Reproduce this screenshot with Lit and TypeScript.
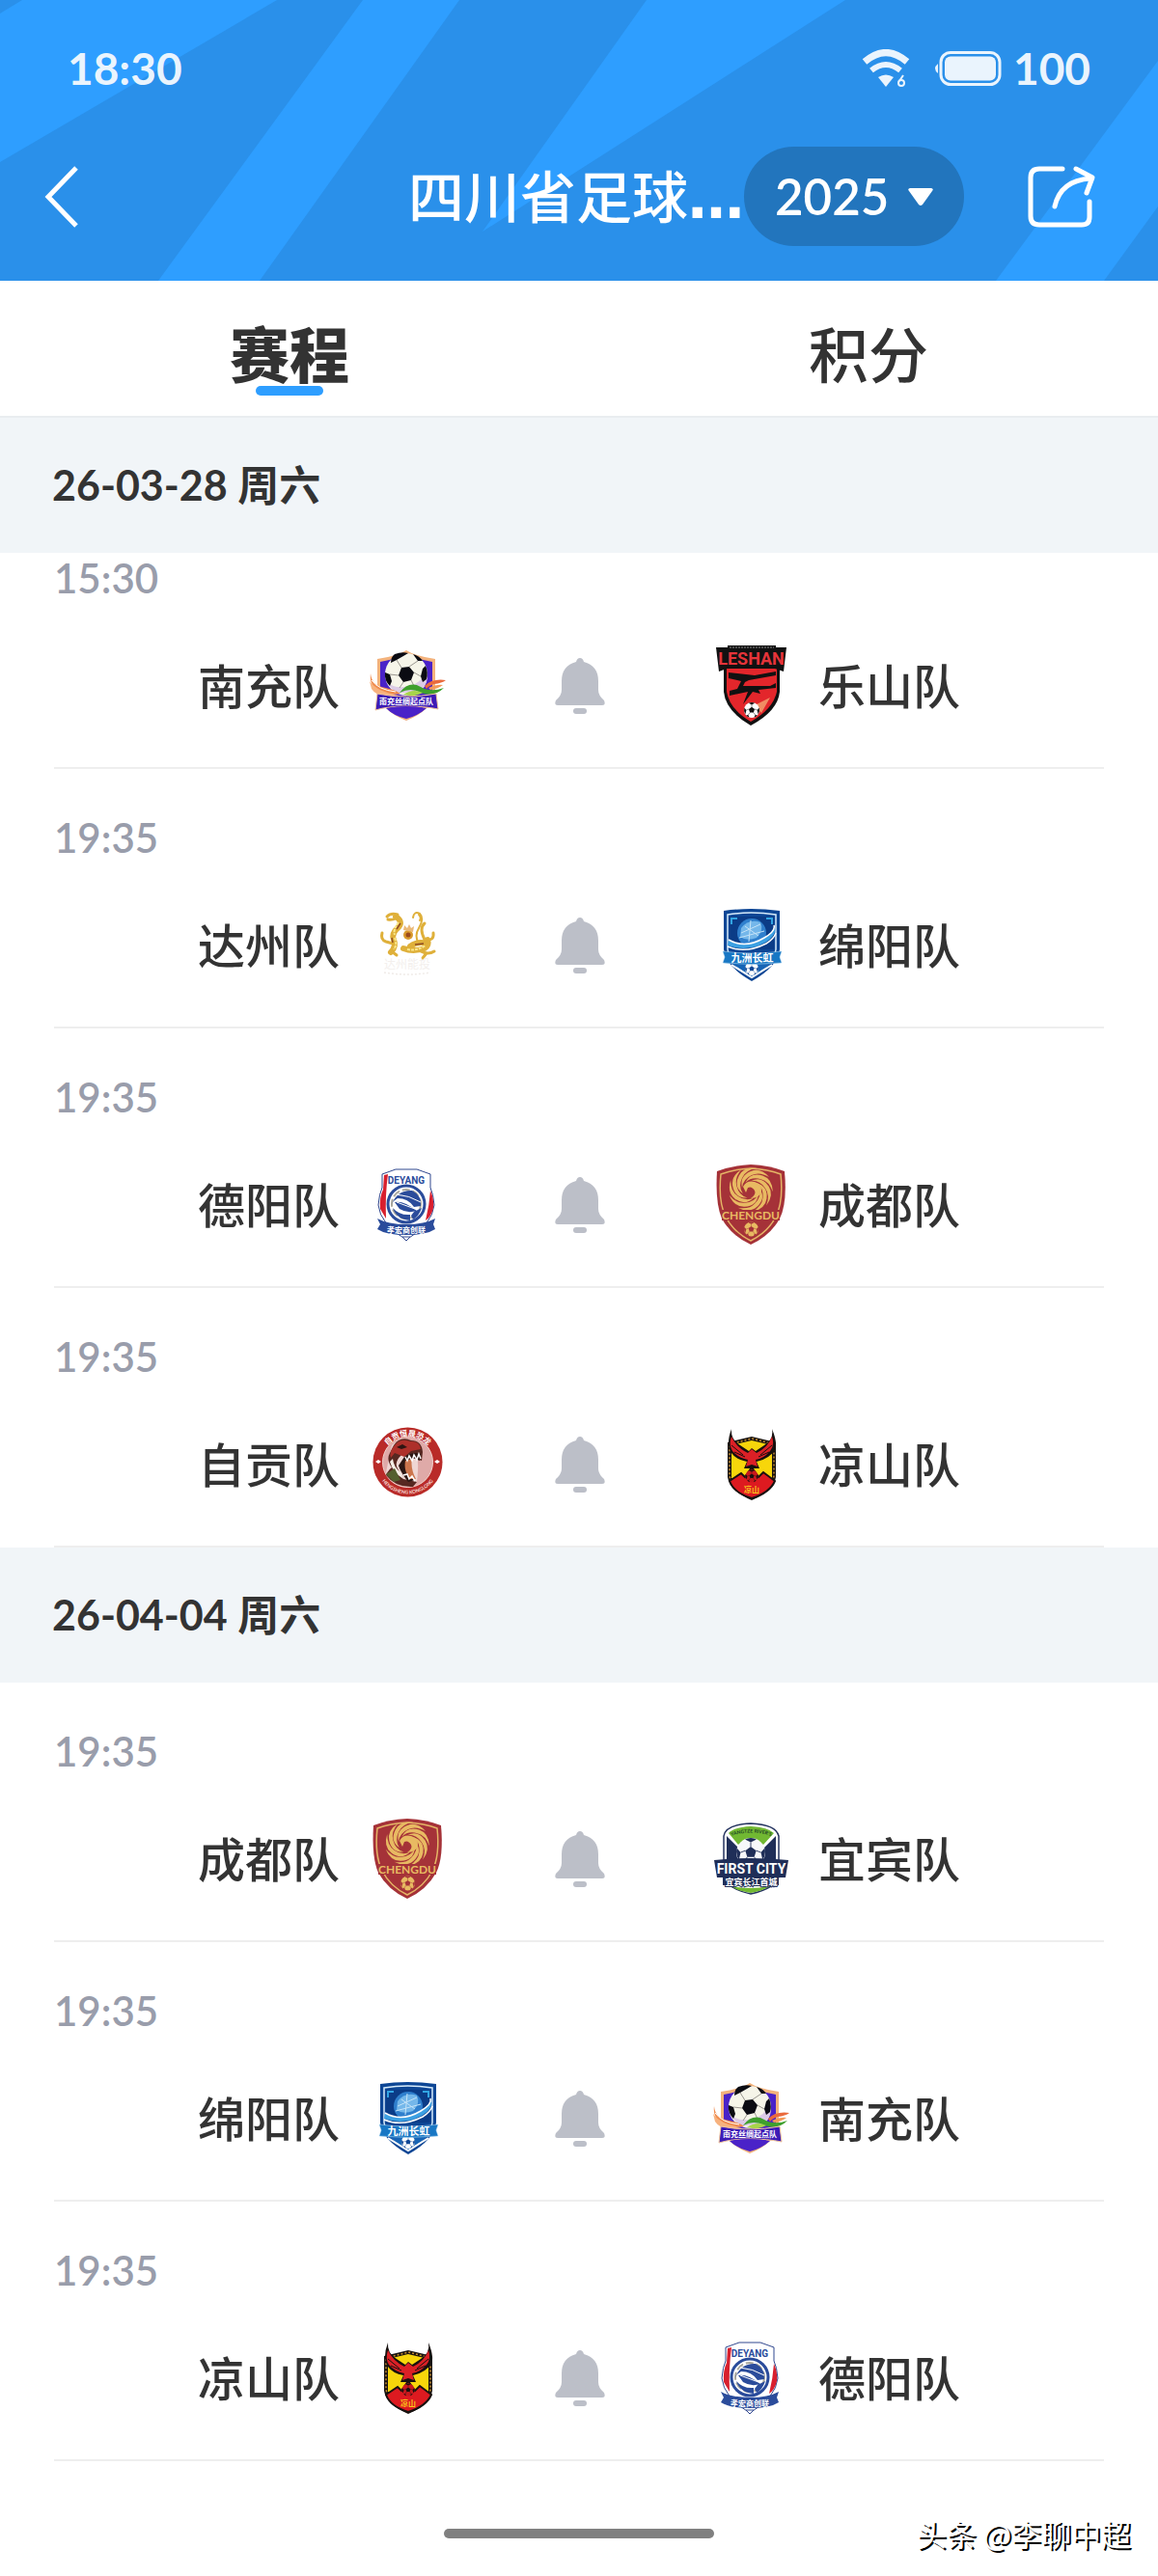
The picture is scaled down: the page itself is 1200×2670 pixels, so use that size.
import { LitElement, html, css, svg } from "lit";
import { customElement, property, state } from "lit/decorators.js";

type Team = "nanchong" | "leshan" | "dazhou" | "mianyang" | "deyang" | "chengdu" | "zigong" | "liangshan" | "yibin";

interface Match {
  time: string;
  home: Team;
  away: Team;
}

interface Day {
  date: string;
  matches: Match[];
}

const NAMES: Record<Team, string> = {
  nanchong: "南充队",
  leshan: "乐山队",
  dazhou: "达州队",
  mianyang: "绵阳队",
  deyang: "德阳队",
  chengdu: "成都队",
  zigong: "自贡队",
  liangshan: "凉山队",
  yibin: "宜宾队",
};

const DAYS: Day[] = [
  {
    date: "26-03-28 周六",
    matches: [
      { time: "15:30", home: "nanchong", away: "leshan" },
      { time: "19:35", home: "dazhou", away: "mianyang" },
      { time: "19:35", home: "deyang", away: "chengdu" },
      { time: "19:35", home: "zigong", away: "liangshan" },
    ],
  },
  {
    date: "26-04-04 周六",
    matches: [
      { time: "19:35", home: "chengdu", away: "yibin" },
      { time: "19:35", home: "mianyang", away: "nanchong" },
      { time: "19:35", home: "liangshan", away: "deyang" },
    ],
  },
];

/* A football centred on the origin with radius 10. */
const ball = (light: string, dark: string) => svg`
  <circle r="10" fill=${light} />
  <path d="M0 -4 L3.8 -1.2 L2.4 3.2 H-2.4 L-3.8 -1.2Z" fill=${dark} />
  <path d="M-4 -9 L0 -7 L4 -9 Q0 -11 -4 -9Z M9.6 -3 L7 0 L8.2 5.4 Q10.8 1 9.6 -3Z M-9.6 -3 L-7 0 L-8.2 5.4 Q-10.8 1 -9.6 -3Z M3 9.5 L4.6 6.4 L7.4 6.6 Q5.6 9 3 9.5Z M-3 9.5 L-4.6 6.4 L-7.4 6.6 Q-5.6 9 -3 9.5Z" fill=${dark} />
  <path d="M0 -4 V-7 M3.8 -1.2 L7 0 M-3.8 -1.2 L-7 0 M2.4 3.2 L4.6 6.4 M-2.4 3.2 L-4.6 6.4" stroke=${dark} stroke-width="0.6" fill="none" />`;

const CRESTS: Record<Team, unknown> = {
  nanchong: svg`
    <path d="M41 5 Q50 11 71 14 L71 46 Q70 66 41 78 Q12 66 11 46 L11 14 Q32 11 41 5Z" fill="#f3b27c" />
    <path d="M41 8 Q50 14 68 17 L68 46 Q66 64 41 75 Q16 64 14 46 L14 17 Q32 14 41 8Z" fill="#4a22c8" />
    <circle cx="41" cy="30" r="22" fill="#f6f5e9" />
    <path d="M21 38 Q30 46 44 42 Q56 40 62 26 Q65 40 56 47 L30 50Z" fill="#dccbe6" />
    <path d="M36 23 L44 22 L49 28 L46 36 L38 38 L33 31Z M29 9 Q37 6 43 8 L38 11 L31 15 L25 18 Q25 12 29 9Z M48 9 Q55 11 58 16 L53 16Z M19 28 L24 30 L26 37 L24 42 Q18 36 19 28Z M58 24 L61 21 Q64 28 62 35 L58 38 L56 32Z" fill="#0b0b12" />
    <path d="M36 23 L31 15 M44 22 L53 16 M49 28 L56 32 M33 31 L24 30 M46 36 L50 44 M38 38 L34 44" stroke="#9a9790" stroke-width="1" fill="none" />
    <path d="M4 29 Q5 42 20 44 Q30 46 35 50 Q14 53 6 41 Q3 36 4 29Z" fill="#f08a4b" />
    <path d="M3 37 Q12 49 33 51 Q12 56 5 45Z" fill="#f7b27e" />
    <path d="M5 36 Q12 46 30 48" fill="none" stroke="#fff" stroke-width="1" />
    <path d="M34 49 Q44 36 56 43 Q66 49 80 44 Q70 54 56 49 Q46 43 34 49Z" fill="#3fa02d" />
    <path d="M38 51 Q48 44 58 49 Q50 54 38 51Z" fill="#a8d44a" />
    <path d="M60 42 Q68 34 82 36 Q78 39 70 40 Q64 42 62 45Z" fill="#ea6a3c" />
    <path d="M64 44 Q73 40 79 41 Q74 45 66 46Z" fill="#f39a58" />
    <path d="M11 50 Q41 56 72 50 L74 66 Q60 63 41 63 Q22 63 9 67Z" fill="#3d1bb6" stroke="#f3c79d" stroke-width="1" />
    <path d="M20 65 Q41 61 62 65 Q53 73 41 76 Q28 73 20 65Z" fill="#4a22c8" />
    <text x="41" y="61" text-anchor="middle" font-size="8" font-weight="700" fill="#fff">南充丝绸起点队</text>`,
  leshan: svg`
    <path d="M14 18 H72 V48 Q70 68 42 83 Q16 68 14 48Z" fill="#111" />
    <path d="M17 24 H69 V48 Q65 66 42 79 Q20 66 17 48Z" fill="#e3262b" />
    <path d="M19 28 L46 31 L68 27 V31 L40 36 L36 38 L34 42 H62 L68 39 V44 L50 46 L52 50 L44 48 L34 61 L39 48 L20 52 V47 L28 45 L32 37 L19 34Z" fill="#111" />
    <path d="M46 62 L62 54 L53 70Z" fill="#f08d63" />
    <g transform="translate(43 67) scale(0.8)">${ball("#fff", "#111")}</g>
    <path d="M6 2 H18 V0 H68 V2 H79 L76 27 L64 23 Q42 20 20 23 L9 27Z" fill="#111" />
    <text x="42.500" y="20" text-anchor="middle" font-size="18" font-weight="700" fill="#e5343a" class="block">LESHAN</text>
    <path d="M20 2 H66" stroke="#8a8a8a" stroke-width="1" stroke-dasharray="2 1" />`,
  dazhou: svg`
    <g fill="none" stroke="#dfb03a" stroke-linecap="round" stroke-linejoin="round">
      <path d="M30 12 Q38 17 33 23 Q25 30 28 36 Q31 43 25 49" stroke-width="6" />
      <path d="M21 12 Q25 8 32 10 M22 15 Q26 16 30 14" stroke-width="3" />
      <path d="M27 40 L20 38 Q14 36 16 29 M27 49 L31 52" stroke-width="3" />
      <path d="M38 45 Q48 49 60 45 Q65 42 63 36" stroke-width="6" />
      <path d="M45 43 Q53 37 62 40" stroke-width="6" />
      <path d="M54 40 Q49 32 54 24 Q60 14 55 9 Q49 6 48 13 M54 10 Q57 13 55 16" stroke-width="2" />
      <path d="M60 36 Q54 24 60 19 M62 36 Q70 37 69 29 M56 48 Q64 52 70 48 M62 50 L58 55" stroke-width="3" />
    </g>
    <path d="M33 18 Q27 26 29 31 M29 34 Q32 41 28 46 M42 46 Q52 48 61 42" fill="none" stroke="#fae88c" stroke-width="2" stroke-dasharray="3 1" />
    <path d="M50 41 L59 40 M35 19 L31 25 M26 34 L27 39" stroke="#8f4b22" stroke-width="1.500" />
    <circle cx="43" cy="31" r="5" fill="#d99a2c" />
    <path d="M38 26 L39 21 L42 24 L44 20 L46 24 L49 22 L48 28Z" fill="#eab978" />
    <circle cx="43" cy="31" r="2.500" fill="#9c4a1c" />
    <text x="42" y="66" text-anchor="middle" font-size="12" fill="#f3efed">达州能投</text>
    <path d="M18 70 Q42 74 66 70" fill="none" stroke="#f0ebe8" stroke-width="1.500" stroke-dasharray="2 2" />`,
  mianyang: svg`
    <path d="M14 6 Q42 2 72 6 V46 Q70 64 43 79 Q16 64 14 46Z" fill="#0d4695" />
    <path d="M18 10 Q42 6 68 10 V46 Q66 61 43 74 Q20 61 18 46Z" fill="none" stroke="#d7ecfb" stroke-width="1.500" />
    <path d="M20 12 H66 V46 H20Z" fill="#0b3c87" />
    <circle cx="43" cy="29" r="15" fill="#2f7fcd" />
    <path d="M32 24 Q40 14 52 18 Q56 26 48 34 Q38 38 31 33Z" fill="#74b7ea" />
    <path d="M36 22 L50 32 M32 29 L52 20 M42 16 L40 38 M30 34 L56 27" stroke="#c4e3f8" stroke-width="1" />
    <path d="M19 36 Q36 46 56 34 Q68 27 66 21 Q71 30 57 39 Q38 49 18 42Z" fill="#3ca0e2" />
    <path d="M19 36 Q36 46 56 34 Q68 27 66 21 M18 43 Q36 51 58 40 Q66 35 68 29" fill="none" stroke="#fff" stroke-width="1.500" />
    <path d="M22 20 V14 H28 M64 20 V14 H58" fill="none" stroke="#31a4e3" stroke-width="2" />
    <path d="M23 61 H63 L43 75Z" fill="#1664b5" />
    <path d="M22 62 L43 75 L64 62" fill="none" stroke="#fff" stroke-width="2" />
    <g transform="translate(43 66) scale(0.7)">${ball("#fff", "#0d4695")}</g>
    <path d="M13 48 Q43 52 74 48 L72 54 L74 60 Q43 63 13 60 L15 54Z" fill="#1877c4" stroke="#bfe1f7" stroke-width="0.500" />
    <text x="43.500" y="59" text-anchor="middle" font-size="11" font-weight="700" fill="#fff">九洲长虹</text>`,
  deyang: svg`
    <path d="M16 10 L30 5 H52 L66 10 V24 Q69 30 70 42 Q68 62 41 78 Q14 62 12 42 Q13 30 16 24Z" fill="#fff" stroke="#31488f" stroke-width="1" />
    <path d="M18 11 L22 10 Q19 32 20 56 L14 46 Q13 34 17 26Z" fill="#d81f2e" />
    <path d="M66 27 Q70 36 69 45 Q67 54 61 58 Q65 42 66 27Z" fill="#d81f2e" />
    <circle cx="41" cy="41" r="19" fill="#fff" stroke="#2b4c9b" stroke-width="3" />
    <circle cx="41" cy="41" r="15" fill="none" stroke="#a9a79c" stroke-width="2" stroke-dasharray="8 3" />
    <path d="M26 41 Q32 26 47 27 Q57 32 56 43 L49 44 Q43 35 32 35 Q28 37 26 41Z" fill="#2b4c9b" />
    <path d="M29 39 Q38 37 52 48 Q42 51 34 46Z M27 45 Q34 53 45 52 L45 58 Q31 57 27 45Z M49 49 L57 45 Q54 54 48 57 L46 53Z" fill="#2b4c9b" />
    <path d="M31 31 Q44 32 56 39 M31 39 L50 46" fill="none" stroke="#fff" stroke-width="1" />
    <text x="41" y="20" text-anchor="middle" font-size="10" font-weight="700" fill="#2b4c9b" class="block">DEYANG</text>
    <path d="M11 56 Q22 62 41 62 Q60 62 71 56 L69 62 L71 67 Q62 73 41 73 Q20 73 11 67 L14 62Z" fill="#2b4c9b" />
    <text x="41" y="71" text-anchor="middle" font-size="8" font-weight="700" fill="#fff">孝宏商创联</text>
    <path d="M37 75 L41 79 L45 75Z" fill="#fff" stroke="#31488f" stroke-width="1" />`,
  chengdu: svg`
    <path d="M42 0 Q62 1 77 7 Q80 40 72 56 Q62 74 42 83 Q22 74 12 56 Q5 40 7 7 Q22 1 42 0Z" fill="#a53238" />
    <path d="M42 4 Q60 5 73 10 Q76 38 68 54 Q60 70 42 79 Q24 70 16 54 Q8 38 11 10 Q24 5 42 4Z" fill="none" stroke="#e5b566" stroke-width="1.500" />
    <g transform="translate(42 26)" fill="#e8ba62">
      ${[0, 40, 80, 120, 160, 200, 240, 280, 320].map(
        (angle) => svg`<path transform=${`rotate(${angle})`} d="M-9 -2 Q-12 -14 0 -19 Q10 -23 19 -13 Q9 -19 1 -15 Q-8 -11 -9 -2Z" />`
      )}
    </g>
    <path d="M34 23 Q38 16 46 18 Q54 20 53 28 Q51 35 42 35 Q48 31 46 27 Q43 22 39 24 L37 29Z" fill="#e8ba62" />
    <path d="M12 47 H72 V58 H12Z" fill="#a53238" />
    <text x="42" y="57" text-anchor="middle" font-size="12" font-weight="700" fill="#e8ba62" class="latin">CHENGDU</text>
    <g transform="translate(42.500 67) scale(0.75)">${ball("#e8ba62", "#a53238")}</g>`,
  zigong: svg`
    <circle cx="42.500" cy="39.500" r="36" fill="#b92b28" />
    <circle cx="42.500" cy="39.500" r="26" fill="#dfaaa8" stroke="#f3d3cd" stroke-width="1" />
    <path d="M26 22 Q34 14 46 17 Q56 28 52 60 Q28 62 20 50Z" fill="#efd6d3" />
    <path d="M28 22 Q35 12 46 17 Q57 17 58 29 L57 38 Q50 35 44 35 L36 32 Q28 40 32 46 L38 57 L52 60 L48 65 Q30 66 20 53 Q22 48 26 45 Q20 37 24 30Z" fill="#572821" />
    <path d="M29 22 Q35 14 45 18 Q55 17 56 26 L46 28 L39 34 L29 30 L25 35 Q23 28 29 22Z" fill="#ad302a" />
    <path d="M39 34 Q48 28 56 31 L55 38 L48 35 Q40 39 40 46 L50 58 L43 60 Q35 50 33 43Z" fill="#2c1713" />
    <path d="M40 38 L47 36 Q45 46 51 57 L45 57 Q38 49 40 38Z" fill="#cc754c" />
    <path d="M27 36 Q28 45 35 50 L38 57 Q27 50 24 39Z" fill="#f6efe7" />
    <path d="M40 34 L42 38 L44 33 L47 38 L49 32 L52 37 L54 31 L56 36 M38 53 L42 52 L44 57 L47 54 L50 59" fill="none" stroke="#fff" stroke-width="1.500" />
    <path d="M20 52 L29 46 L35 58 L28 60Z" fill="#54602f" />
    <path d="M31 24 L37 21 L42 24 L36 26Z" fill="#2e1512" />
    <path id="zigong-top" d="M15 40 A27 27 0 0 1 70 40" fill="none" />
    <text font-size="8" font-weight="700" fill="#fff" text-anchor="middle"><textPath href="#zigong-top" startOffset="50%">自贡恒晟恐龙</textPath></text>
    <path id="zigong-low" d="M12 52 A33 33 0 0 0 73 52" fill="none" />
    <text font-size="5" font-weight="700" fill="#f8ded7" text-anchor="middle" class="latin"><textPath href="#zigong-low" startOffset="50%">HENGSHENG KONGLONG</textPath></text>
    <path d="M9 39 L12 37 L15 39 L12 41Z M70 39 L73 37 L76 39 L73 41Z" fill="#fff" />`,
  liangshan: svg`
    <path d="M18 19 L43 13 L68 19 V55 Q66 69 43 79 Q20 69 18 55Z" fill="#181310" />
    <path d="M20 21 L43 15 L66 21 V54 Q62 68 43 76 Q24 68 20 54Z" fill="none" stroke="#c58d33" stroke-width="1.500" stroke-dasharray="2 2" />
    <path d="M22 22 L43 17 L64 22 V56 H22Z" fill="#f7d60b" />
    <path d="M20 59 L32 51 L36 55 L43 45 L50 55 L55 50 L67 59 Q62 71 43 77 Q24 71 20 59Z" fill="#dd1a20" stroke="#191210" stroke-width="2" />
    <path d="M22 5 Q21 16 31 22 L40 28 L43 25 L47 28 L56 22 Q66 16 64 5 Q71 22 66 29 L60 34 Q54 38 48 39 L51 46 H35 L38 39 Q27 37 22 30 Q16 21 22 5Z" fill="#17110f" />
    <path d="M22 13 Q27 24 39 30 L43 26 L48 30 Q60 24 64 13 Q67 22 62 28 Q55 36 47 37 L49 44 L43 42 L37 44 L39 37 Q29 35 23 28 Q19 22 22 13Z" fill="#dc2026" />
    <path d="M22 22 L34 32 M25 29 L36 34 M64 22 L52 32 M61 29 L50 34" stroke="#17110f" stroke-width="1" />
    <g transform="translate(43 54) scale(0.65)">${ball("#c8181d", "#17110f")}</g>
    <text x="43" y="71" text-anchor="middle" font-size="8" font-weight="700" fill="#f9c51a">凉山</text>`,
  yibin: svg`
    <path d="M14 18 Q16 6 42 5 Q68 6 71 18 V60 Q68 72 42 78 Q16 72 14 60Z" fill="#fff" stroke="#24335f" stroke-width="1.500" />
    <path d="M17 18 L31 32 V45 H54 V32 L68 18 V45 H17Z" fill="#1f2e58" />
    <path d="M19 15 Q24 9 42 8 Q60 9 66 15 L55 27 Q42 19 29 27Z" fill="#71b832" />
    <path id="yibin-arc" d="M22 18 Q42 11 63 18" fill="none" />
    <text font-size="5" font-weight="700" fill="#214626" text-anchor="middle" class="latin"><textPath href="#yibin-arc" startOffset="50%">YANGTZE RIVER'S</textPath></text>
    <g transform="translate(42 35) scale(1.500)">${ball("#f7f8fb", "#1f2e58")}</g>
    <path d="M4 43 Q42 39 81 43 L78 61 H71 V69 H13 V61 H7Z" fill="#1f2e58" />
    <path d="M22 70 Q42 74 62 70 Q54 75 42 77 Q28 75 22 70Z" fill="#71b832" />
    <text x="42.500" y="57" text-anchor="middle" font-size="14" font-weight="700" fill="#fff" class="block">FIRST CITY</text>
    <text x="42.500" y="69" text-anchor="middle" font-size="9" font-weight="700" fill="#fff" stroke="#1f2e58" stroke-width="2" paint-order="stroke">宜宾长江首城</text>`,
};

@customElement("team-crest")
export class TeamCrest extends LitElement {
  @property() team: Team = "nanchong";

  static styles = css`
    :host {
      display: block;
      width: 84px;
      height: 84px;
    }
    svg {
      display: block;
      overflow: visible;
      font-family: "Noto Sans CJK SC", sans-serif;
    }
    .block {
      font-family: Roboto, sans-serif;
    }
    .latin {
      font-family: Lato, sans-serif;
    }
  `;

  render() {
    return html`<svg width="84" height="84" viewBox="0 0 84 84" aria-hidden="true">${CRESTS[this.team]}</svg>`;
  }
}

@customElement("match-row")
export class MatchRow extends LitElement {
  @property({ attribute: false }) match!: Match;

  static styles = css`
    :host {
      display: block;
      padding: 47px 56px 0;
    }
    .body {
      display: flex;
      flex-direction: column;
      gap: 46px;
      padding-bottom: 42px;
      border-bottom: 2px solid #eeeeee;
    }
    .time {
      font-size: 42px;
      line-height: 48px;
      color: #999dab;
      font-weight: 600;
    }
    .teams {
      display: grid;
      grid-template-columns: 1fr 84px 272px 84px 1fr;
      align-items: center;
    }
    .name {
      padding: 0 28px;
      font-size: 49px;
      line-height: 72px;
      font-weight: 500;
      color: #333333;
      white-space: nowrap;
    }
    .home {
      text-align: right;
    }
    .bell {
      justify-self: center;
      display: block;
      padding: 0;
      border: 0;
      background: none;
    }
    .bell svg {
      display: block;
    }
  `;

  render() {
    const { time, home, away } = this.match;
    return html`
      <div class="body">
        <time class="time">${time}</time>
        <div class="teams">
          <span class="name home">${NAMES[home]}</span>
          <team-crest .team=${home}></team-crest>
          <button class="bell" type="button" aria-label="提醒">
            <svg width="54" height="60" viewBox="0 0 54 60" aria-hidden="true" fill="#bcbfc8">
              <path d="M28 1 Q31 1 32 5 Q47 9 47 25 V34 Q47 40 53 45 Q55 50 51 50 H5 Q1 50 3 45 Q9 40 9 34 V25 Q9 9 24 5 Q25 1 28 1Z" />
              <rect x="21" y="53" width="14" height="6" rx="3" />
            </svg>
          </button>
          <team-crest .team=${away}></team-crest>
          <span class="name">${NAMES[away]}</span>
        </div>
      </div>
    `;
  }
}

@customElement("app-root")
export class AppRoot extends LitElement {
  @state() private tab = 0;

  static styles = css`
    :host {
      display: block;
      min-height: 100vh;
      background: #ffffff;
      color: #333333;
      font-family: Lato, "Noto Sans CJK SC", sans-serif;
    }
    * {
      box-sizing: border-box;
    }
    button,
    select {
      font: inherit;
      color: inherit;
      border: 0;
      background: none;
      padding: 0;
    }
    svg {
      display: block;
    }
    .header {
      position: relative;
      background: #2a90ea;
      color: #ffffff;
      padding-bottom: 36px;
    }
    .stripes {
      position: absolute;
      inset: 0;
      width: 100%;
      height: 100%;
    }
    .status {
      position: relative;
      display: flex;
      align-items: center;
      height: 142px;
      padding: 0 70px;
      margin-bottom: 10px;
      font-size: 46px;
      font-weight: 700;
      line-height: 56px;
      color: #eaf4fd;
    }
    .wifi {
      margin-left: auto;
    }
    .battery {
      margin: 0 12px 0 25px;
    }
    .nav {
      position: relative;
      display: flex;
      align-items: center;
      height: 103px;
      padding: 0 64px 0 44px;
    }
    .title {
      margin: 0 0 0 auto;
      font-size: 58px;
      line-height: 80px;
      font-weight: 500;
      white-space: nowrap;
    }
    .ellipsis {
      font-family: "DejaVu Sans", sans-serif;
      font-weight: 700;
      line-height: 1;
    }
    .season {
      position: relative;
      display: flex;
      align-items: center;
      width: 228px;
      height: 103px;
      border-radius: 52px;
      background: #2275bd;
    }
    .season select {
      appearance: none;
      width: 100%;
      height: 100%;
      padding-left: 32px;
      font-size: 51px;
      font-weight: 600;
    }
    .caret {
      position: absolute;
      right: 31px;
      pointer-events: none;
    }
    .share {
      margin-left: 65px;
    }
    .tabs {
      display: grid;
      grid-template-columns: 1fr 1fr;
      border-bottom: 2px solid #e9edf0;
    }
    .tab {
      display: flex;
      flex-direction: column;
      align-items: center;
      gap: 2px;
      padding: 47px 0 21px;
      font-size: 62px;
      line-height: 60px;
      font-weight: 500;
    }
    .tab::after {
      content: "";
      width: 70px;
      height: 10px;
      border-radius: 5px;
    }
    .tab.active {
      font-weight: 800;
    }
    .tab.active::after {
      background: #2e9eff;
    }
    .date {
      margin: 0;
      padding: 0 54px;
      background: #f1f5f8;
      font-size: 43px;
      line-height: 140px;
      font-weight: 700;
    }
    .tucked {
      padding-top: 2px;
    }
    .footer {
      display: grid;
      grid-template-columns: 1fr 280px 1fr;
      align-items: center;
      padding: 53px 28px 0;
    }
    .handle {
      grid-column: 2;
      height: 10px;
      border-radius: 5px;
      background: #808080;
    }
    .credit {
      justify-self: end;
      font-family: "Noto Sans CJK SC", sans-serif;
      font-size: 31px;
      line-height: 44px;
      color: #ffffff;
      text-shadow: 2px 2px 0 #000000;
    }
  `;

  render() {
    return html`
      <header class="header">
        <svg class="stripes" viewBox="0 0 1200 291" preserveAspectRatio="none" aria-hidden="true" fill="#2e9eff">
          <path d="M0 14 L23 0 H287 L0 168Z" />
          <path d="M376 0 H476 L269 291 H164Z" />
          <path d="M670 0 H876 L500 240Z" />
          <path d="M1200 63 L1032 291 H1144 L1200 214Z" />
        </svg>
        <div class="status">
          <span>18:30</span>
          <svg class="wifi" width="50" height="40" viewBox="0 0 50 40" fill="none" aria-hidden="true">
            <path d="M3 13 Q25 -6 47 13" stroke="#eaf4fd" stroke-width="7" />
            <path d="M10 22 Q25 10 40 22" stroke="#eaf4fd" stroke-width="6" />
            <path d="M17 29 Q25 24 33 29 L25 39Z" fill="#eaf4fd" />
            <path d="M43 27 L39 33" stroke="#eaf4fd" stroke-width="2" />
            <circle cx="41" cy="35" r="3" stroke="#eaf4fd" stroke-width="2" />
          </svg>
          <svg class="battery" width="70" height="36" viewBox="0 0 70 36" fill="none" aria-hidden="true">
            <path d="M4 13 Q-2 18 4 23Z" fill="#eaf4fd" />
            <rect x="7" y="1.500" width="61" height="33" rx="10" stroke="#eaf4fd" stroke-width="3" />
            <rect x="11" y="5.500" width="53" height="25" rx="6" fill="#eaf4fd" />
          </svg>
          <span>100</span>
        </div>
        <nav class="nav">
          <button type="button" aria-label="返回">
            <svg width="40" height="66" viewBox="0 0 40 66" aria-hidden="true">
              <path d="M35 3 L6 33 L35 63" fill="none" stroke="#fff" stroke-width="5" />
            </svg>
          </button>
          <h1 class="title">四川省足球<span class="ellipsis">…</span></h1>
          <label class="season">
            <select aria-label="赛季">
              <option selected>2025</option>
            </select>
            <svg class="caret" width="28" height="20" viewBox="0 0 28 20" aria-hidden="true">
              <path d="M3 1 H25 Q28 2 26 4 L16 18 Q14 20 12 18 L2 4 Q0 2 3 1Z" fill="#fff" />
            </svg>
          </label>
          <button class="share" type="button" aria-label="分享">
            <svg width="72" height="66" viewBox="0 0 72 66" fill="none" stroke="#fff" stroke-width="5" stroke-linecap="round" stroke-linejoin="round" aria-hidden="true">
              <path d="M37 4 H13 Q4 4 4 13 V53 Q4 62 13 62 H57 Q65 62 65 54 V38" />
              <path d="M29 43 Q35 16 66 14 M51 4 L68 13 L62 29" />
            </svg>
          </button>
        </nav>
      </header>
      <div class="tabs" role="tablist">
        ${["赛程", "积分"].map(
          (label, i) => html`<button
            type="button"
            role="tab"
            aria-selected=${this.tab === i ? "true" : "false"}
            class=${this.tab === i ? "tab active" : "tab"}
            @click=${() => (this.tab = i)}
          >${label}</button>`
        )}
      </div>
      <main>
        ${DAYS.map(
          (day, d) => html`
            <section>
              <h2 class="date">${day.date}</h2>
              ${day.matches.map(
                (match, m) => html`<match-row class=${d === 0 && m === 0 ? "tucked" : ""} .match=${match}></match-row>`
              )}
            </section>
          `
        )}
      </main>
      <footer class="footer">
        <div class="handle"></div>
        <span class="credit">头条 @李聊中超</span>
      </footer>
    `;
  }
}
